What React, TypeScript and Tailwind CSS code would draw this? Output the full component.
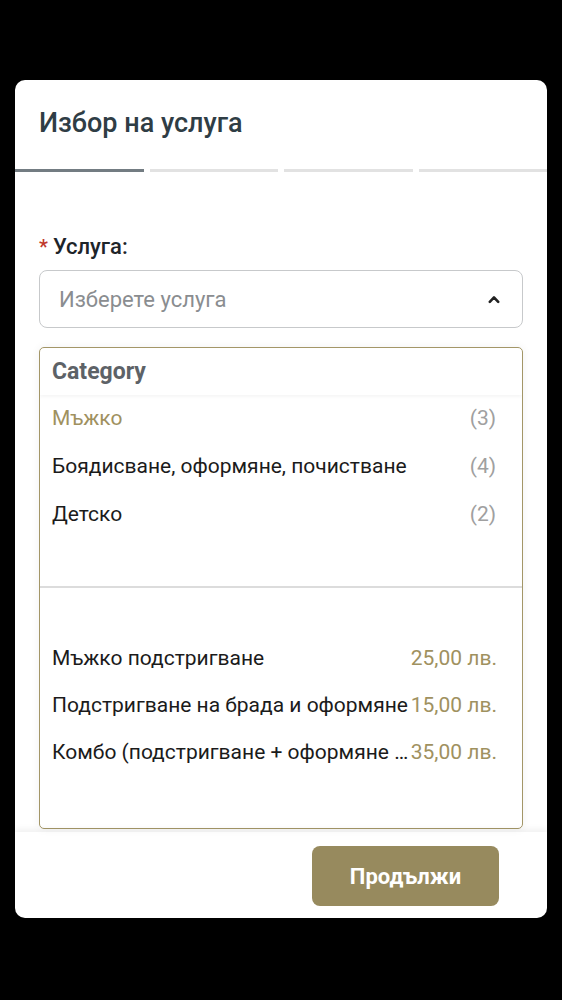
import React from "react";

const cats = [
  { name: "Мъжко", count: 3, active: true },
  { name: "Боядисване, оформяне, почистване", count: 4 },
  { name: "Детско", count: 2 },
];
const services = [
  { name: "Мъжко подстригване", price: "25,00 лв." },
  { name: "Подстригване на брада и оформяне", price: "15,00 лв." },
  { name: "Комбо (подстригване + оформяне на брада)", price: "35,00 лв." },
];

export default function App() {
  return (
    <div
      className="w-[562px] h-[1000px] bg-black pt-[80px] px-[15px]"
      style={{ fontFamily: "Roboto, 'Noto Sans', sans-serif" }}
    >
      <div className="bg-white rounded-[10px] h-[838px] flex flex-col overflow-hidden">
        <div className="h-[89px] flex items-center px-[24px] pb-[2px]">
          <h1 className="text-[27px] font-medium text-[#2f3d45]">Избор на услуга</h1>
        </div>
        <div className="flex gap-[6px] h-[3px]">
          <div className="flex-1 bg-[#737c82]" />
          <div className="flex-1 bg-[#e2e2e2]" />
          <div className="flex-1 bg-[#e2e2e2]" />
          <div className="flex-1 bg-[#e2e2e2]" />
        </div>
        <div className="flex-1 px-[24px] pt-[64px]">
          <div className="flex items-center gap-[5px] text-[22px] font-medium text-[#1d2429] leading-none">
            <span className="text-[#c0392b] text-[20px]">*</span>
            <span>Услуга:</span>
          </div>
          <div className="mt-[12px] h-[58px] border border-[#c7c9cb] rounded-[8px] flex items-center justify-between pl-[19px] pr-[22px]">
            <span className="text-[22px] text-[#8a8d90]">Изберете услуга</span>
            <svg width="12" height="9" viewBox="0 0 12 9" fill="none">
              <path d="M1.8 6.8 L6 2.4 L10.2 6.8" stroke="#222" strokeWidth="2.6" strokeLinecap="round" strokeLinejoin="round" />
            </svg>
          </div>
          <div className="mt-[19px] h-[482px] border border-[#a39667] rounded-[5px] flex flex-col overflow-hidden shadow-[0_0_10px_rgba(0,0,0,0.06)]">
            <div className="h-[47px] pt-[1px] flex items-center px-[12px] shadow-[0_2px_3px_rgba(0,0,0,0.04)]">
              <span className="text-[23px] font-bold text-[#5d6267]">Category</span>
            </div>
            <div className="flex flex-col">
              {cats.map((c) => (
                <div key={c.name} className="h-[48px] flex items-center justify-between pl-[12px] pr-[26px]">
                  <span className={`text-[21px] ${c.active ? "text-[#a0915f]" : "text-[#1b1b1b]"}`}>{c.name}</span>
                  <span className="text-[21px] text-[#a0a0a0]">({c.count})</span>
                </div>
              ))}
            </div>
            <div className="mt-[47px] h-[2px] bg-[#dcdcdc]" />
            <div className="flex flex-col pt-[47px]">
              {services.map((s) => (
                <div key={s.name} className="h-[47px] flex items-center justify-between gap-[1px] pl-[12px] pr-[25px]">
                  <span className="text-[21px] text-[#1b1b1b] truncate min-w-0">{s.name}</span>
                  <span className="text-[21px] text-[#a0915f] shrink-0">{s.price}</span>
                </div>
              ))}
            </div>
          </div>
        </div>
        <div className="h-[86px] flex items-center justify-end pr-[48px] pt-[2px] shadow-[0_-3px_6px_rgba(0,0,0,0.06)] z-10">
          <button className="w-[187px] h-[60px] rounded-[8px] bg-[#978a5e] text-white text-[22px] font-bold">Продължи</button>
        </div>
      </div>
    </div>
  );
}
